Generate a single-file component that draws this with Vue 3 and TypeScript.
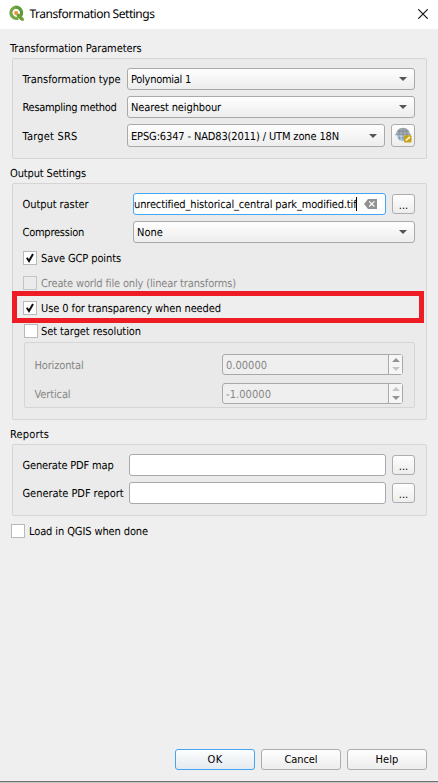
<script setup lang="ts">
import { ref } from 'vue'

const saveGcp = ref(true)
const worldFile = ref(false)
const zeroTransparency = ref(true)
const targetResolution = ref(false)
const loadWhenDone = ref(false)

// Spreads the letters of a label so that it takes up the given width in pixels.
const vFit = {
  mounted(el: HTMLElement, binding: { value: number }) {
    const count = (el.textContent ?? '').length
    const natural = el.getBoundingClientRect().width
    el.style.letterSpacing = `${(binding.value - natural) / count}px`
  },
}
</script>

<template>
  <div class="dialog">
    <header class="titlebar">
      <svg class="logo" width="16" height="16" viewBox="0 0 16 16">
        <path d="M8 2.1A5.7 5.7 0 1 0 10.3 13.2" fill="none" stroke="#76a843" stroke-width="3.2" />
        <path d="M7.6 2.1A5.8 5.8 0 0 1 12.6 11" fill="none" stroke="#5f9a38" stroke-width="3.2" />
        <path d="M8.6 8.8h2.6l4.6 4.7v2.3h-2.5L8.6 11.2z" fill="#6a9f37" />
        <path d="M6.4 6.2h3.400v2.200L8.600 9.800H6.400z" fill="#ee8a2c" />
      </svg>
      <h1><span v-fit="125">Transformation Settings</span></h1>
      <svg class="close" width="10" height="10" viewBox="0 0 10 10">
        <path d="M.3.3l9.4 9.4M9.7.3L.3 9.7" stroke="#111" stroke-width="1.15" />
      </svg>
    </header>

    <main>
      <h2><span v-fit="131.5">Transformation Parameters</span></h2>
      <section class="group params">
        <div class="row">
          <label class="l104"><span v-fit="98">Transformation type</span></label>
          <div class="combo"><span v-fit="60">Polynomial 1</span><i class="arrow" /></div>
        </div>
        <div class="row">
          <label class="l104"><span v-fit="94">Resampling method</span></label>
          <div class="combo"><span v-fit="90">Nearest neighbour</span><i class="arrow" /></div>
        </div>
        <div class="row tall">
          <label class="l104"><span v-fit="55">Target SRS</span></label>
          <div class="combo"><span v-fit="208">EPSG:6347 - NAD83(2011) / UTM zone 18N</span><i class="arrow" /></div>
          <button class="crs">
            <svg width="17" height="17" viewBox="0 0 17 17">
              <circle cx="8" cy="7.5" r="6.6" fill="#b9d3ea" />
              <path d="M1 7.5a7 6.8 0 0 1 14 0z" fill="#a3abb0" />
              <path d="M0 7.7h16M2.5 4.2h11M3 11h10M8 1v13M5 1.7Q2.6 7.5 5 13.3M11 1.7Q13.4 7.5 11 13.3" fill="none" stroke="#75848f" stroke-width=".7" />
              <rect x="9" y="8.3" width="7.5" height="7.2" rx="1" fill="#c8a119" />
              <path d="M10.6 14l.4-1.7 3.3-3 1.2 1.2-3.3 3.1z" fill="#fff6c9" />
            </svg>
          </button>
        </div>
      </section>

      <h2><span v-fit="76">Output Settings</span></h2>
      <section class="group output">
        <div class="row">
          <label class="l110"><span v-fit="66">Output raster</span></label>
          <div class="field focused">
            <span v-fit="222.5">unrectified_historical_central park_modified.tif</span><i class="caret" />
            <svg class="clear" width="13" height="10" viewBox="0 0 13 10">
              <path d="M4 0h9v10H4L0 5z" fill="#929292" />
              <path d="M5.2 2.3l5.2 5.2M10.4 2.3L5.2 7.5" stroke="#fff" stroke-width="1.1" />
            </svg>
          </div>
          <button class="browse">...</button>
        </div>
        <div class="row">
          <label class="l110"><span v-fit="61.5">Compression</span></label>
          <div class="combo"><span v-fit="26">None</span><i class="arrow" /></div>
        </div>
        <div class="check save" @click="saveGcp = !saveGcp">
          <b class="box"><svg v-if="saveGcp" viewBox="0 0 12 12"><path d="M2.8 5.8L5 9l4-7" /></svg></b>
          <span v-fit="80">Save GCP points</span>
        </div>
        <div class="check world disabled">
          <b class="box"><svg v-if="worldFile" viewBox="0 0 12 12"><path d="M2.8 5.8L5 9l4-7" /></svg></b>
          <span v-fit="195">Create world file only (linear transforms)</span>
        </div>
        <div class="check highlight" @click="zeroTransparency = !zeroTransparency">
          <b class="box"><svg v-if="zeroTransparency" viewBox="0 0 12 12"><path d="M2.8 5.8L5 9l4-7" /></svg></b>
          <span v-fit="180">Use 0 for transparency when needed</span>
        </div>
        <div class="check target" @click="targetResolution = !targetResolution">
          <b class="box"><svg v-if="targetResolution" viewBox="0 0 12 12"><path d="M2.8 5.8L5 9l4-7" /></svg></b>
          <span v-fit="100">Set target resolution</span>
        </div>
        <div class="group resolution">
          <div class="row">
            <label class="l187"><span v-fit="49">Horizontal</span></label>
            <div class="spin"><span v-fit="41">0.00000</span><div class="steps"><i class="up" /><i class="down dim" /></div></div>
          </div>
          <div class="row">
            <label class="l187"><span v-fit="36">Vertical</span></label>
            <div class="spin"><span v-fit="45">-1.00000</span><div class="steps"><i class="up dim" /><i class="down" /></div></div>
          </div>
        </div>
      </section>

      <h2 class="reports-title"><span v-fit="39">Reports</span></h2>
      <section class="group reports">
        <div class="row">
          <label class="l106"><span v-fit="91">Generate PDF map</span></label>
          <div class="field" />
          <button class="browse">...</button>
        </div>
        <div class="row">
          <label class="l106"><span v-fit="101">Generate PDF report</span></label>
          <div class="field" />
          <button class="browse">...</button>
        </div>
      </section>
      <div class="check load" @click="loadWhenDone = !loadWhenDone">
        <b class="box"><svg v-if="loadWhenDone" viewBox="0 0 12 12"><path d="M2.8 5.8L5 9l4-7" /></svg></b>
        <span v-fit="119">Load in QGIS when done</span>
      </div>
    </main>

    <footer>
      <button class="primary"><span v-fit="15">OK</span></button>
      <button><span v-fit="33">Cancel</span></button>
      <button><span v-fit="23">Help</span></button>
    </footer>
  </div>
</template>

<style>
body { margin: 0; }
</style>

<style scoped>
* { box-sizing: border-box; }
.dialog {
  width: 438px; height: 783px; display: flex; flex-direction: column;
  background: #efefef; color: #000; overflow: hidden;
  font: 11px/14px "DejaVu Sans Condensed", "DejaVu Sans", sans-serif; font-stretch: condensed;
  text-rendering: geometricPrecision; white-space: nowrap;
  border-bottom: 1px solid #c4c4c4; box-shadow: inset 0 -1px #707070;
}
.titlebar { height: 29px; flex: none; background: #fff; display: flex; align-items: center; padding: 0 10px 2px 8px; }
.logo { margin-top: -1px; }
h1 { margin: 1px auto 0 5.500px; font: 12px/16px "Noto Sans", sans-serif; }
main { padding: 12px 11px 0 12px; flex: 1; }
h2 { margin: 0 0 3px -2px; height: 14px; font: inherit; line-height: 16px; }
.group { border: 1px solid #d5d5d5; border-radius: 2px; background: #ebebeb; }
.params { height: 101px; padding: 9px 11px 0 10px; margin-bottom: 7px; }
.row { display: flex; align-items: center; height: 22px; margin-bottom: 6px; }
.row.tall { height: 23px; }
.l104 { width: 104px; } .l110 { width: 110px; } .l106 { width: 106px; } .l187 { width: 187px; }
label { flex: none; display: flex; }
label span { margin-left: -0.5px; }
label span, .combo span, .field span, .check span, .spin span { padding-top: 2px; }
.combo {
  flex: 1; height: 100%; display: flex; align-items: center; justify-content: space-between;
  border: 1px solid #a9a9a9; border-radius: 3px; background: linear-gradient(#fefefe, #ededed);
  padding: 0 7px 0 3px;
}
.arrow { border: 4px solid transparent; border-top-color: #555; border-bottom: 0; }
button {
  height: 21px; width: 80px; padding: 0; border: 1px solid #adadad; border-radius: 3px;
  background: linear-gradient(#fefefe, #ededed); font: inherit; color: inherit;
}
.crs { width: 24px; height: 23px; margin-left: 6px; display: flex; align-items: center; justify-content: center; }
.browse { width: 23px; height: 20px; margin-left: 6px; padding-top: 3px; line-height: 15px; }
.output { height: 237px; padding: 9px 11px 0 10px; }
.field { flex: 1; height: 22px; display: flex; align-items: center; background: #fff; border: 1px solid #a9a9a9; border-radius: 3px; }
.focused { border-color: #43a5f5; }
.caret { width: 1px; height: 14px; background: #000; }
.clear { margin-left: 7px; }
.check { display: flex; align-items: center; height: 14px; gap: 4px; }
.box { width: 14px; height: 14px; flex: none; border: 1px solid #b9b9b9; background: #fff; }
.box svg { display: block; width: 12px; height: 12px; fill: none; stroke: #111; stroke-width: 2; }
.save { margin-top: 8px; }
.world { margin-top: 11px; }
.disabled { color: #868686; }
.disabled .box { background: #ebebeb; border-color: #c5c5c5; }
.highlight { width: 412px; height: 32px; margin: 1px 0 0 -11px; border: 5px solid #ee1c24; background: #eee; padding: 2px 0 0 6px; }
.target { margin: 1px 0 4px 1px; gap: 3px; }
.resolution { height: 66px; margin-left: 1px; padding: 11px 11px 0 10px; background: #e9e9e9; color: #868686; }
.resolution .row { height: 21px; margin-bottom: 8px; }
.spin { flex: 1; height: 21px; display: flex; align-items: center; justify-content: space-between; border: 1px solid #a9a9a9; border-radius: 3px; background: #efefef; padding-left: 3px; }
.steps { width: 14px; height: 19px; border-left: 1px solid #a9a9a9; background: #f6f6f6; display: flex; flex-direction: column; align-items: center; justify-content: center; gap: 5px; }
.up { border: 4px solid transparent; border-bottom-color: #949494; border-top: 0; }
.down { border: 4px solid transparent; border-top-color: #949494; border-bottom: 0; }
.up.dim { border-bottom-color: #c6c6c6; }
.down.dim { border-top-color: #c6c6c6; }
.reports-title { margin-top: 7px; }
.reports { height: 72px; padding: 9px 11px 0 10px; }
.load { margin: 8px 0 0 -1px; }
footer { display: flex; gap: 6px; justify-content: flex-end; padding: 0 11px 12px; }
.primary { border-color: #43a5f5; background: linear-gradient(#fdfefe, #e4eaf0); }
</style>
